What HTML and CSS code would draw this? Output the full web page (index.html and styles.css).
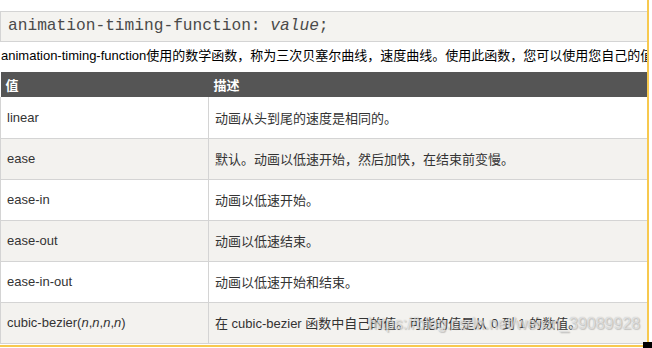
FILE: index.html
```
<!DOCTYPE html>
<html lang="zh">
<head>
<meta charset="utf-8">
<link rel="stylesheet" href="styles.css">
</head>
<body>
<div class="frame">
  <div class="code">animation-timing-function: <i>value</i>;</div>
  <p class="desc">animation-timing-function使用的数学函数，称为三次贝塞尔曲线，速度曲线。使用此函数，您可以使用您自己的值来充填此函数</p>
  <table class="ref">
    <thead>
      <tr><th class="c1">值</th><th>描述</th></tr>
    </thead>
    <tbody>
      <tr><td class="c1">linear</td><td>动画从头到尾的速度是相同的。</td></tr>
      <tr><td class="c1">ease</td><td>默认。动画以低速开始，然后加快，在结束前变慢。</td></tr>
      <tr><td class="c1">ease-in</td><td>动画以低速开始。</td></tr>
      <tr><td class="c1">ease-out</td><td>动画以低速结束。</td></tr>
      <tr><td class="c1">ease-in-out</td><td>动画以低速开始和结束。</td></tr>
      <tr><td class="c1">cubic-bezier(<i>n</i>,<i>n</i>,<i>n</i>,<i>n</i>)</td><td>在 cubic-bezier 函数中自己的值。可能的值是从 0 到 1 的数值。</td></tr>
    </tbody>
  </table>
  <div class="watermark">https://blog.csdn.net/weixin_39089928</div>
</div>
<div class="corner"></div>
</body>
</html>
```
FILE: styles.css
```
html, body {
  margin: 0;
  padding: 0;
  background: #fff;
  overflow: hidden;
}
body {
  position: relative;
  width: 652px;
  height: 348px;
  font-family: "Liberation Sans", Arial, "Noto Sans CJK SC", sans-serif;
  color: #333;
}
.frame {
  position: relative;
  width: 649px;
  height: 347px;
  border-right: 2px solid #f7c94f;
  border-bottom: 2px solid #f7c94f;
  overflow: hidden;
  padding-top: 11px;
  box-sizing: border-box;
}
.code {
  width: 700px;
  height: 31px;
  box-sizing: border-box;
  background: #f4f3f0;
  border: 1px solid #d4d4d4;
  font-family: "Liberation Mono", "Courier New", monospace;
  font-size: 16.2px;
  line-height: 29px;
  padding-left: 7px;
  color: #4a4a4a;
  white-space: nowrap;
}
.code i { font-style: italic; }
.desc {
  margin: 0;
  height: 30px;
  line-height: 28px;
  font-size: 13px;
  color: #000;
  white-space: nowrap;
  padding-left: 1px;
}
.ref {
  border-collapse: collapse;
  width: 700px;
  font-size: 13px;
  table-layout: fixed;
}
.ref th {
  background: #555;
  color: #fff;
  font-weight: bold;
  text-align: left;
  height: 25px;
  padding: 0 0 0 5px;
  box-sizing: border-box;
  font-size: 13px;
}
.ref th.c1 { width: 208px; }
.ref td {
  height: 41px;
  box-sizing: border-box;
  padding: 0 0 0 6px;
  border: 1px solid #d4d4d4;
  border-top: none;
  vertical-align: middle;
}
.ref tbody tr:nth-child(even) td { background: #f3f2ef; }
.ref td i { font-style: italic; }
.watermark {
  position: absolute;
  left: 368px;
  top: 315px;
  font-size: 16px;
  color: rgba(255, 255, 255, 0.55);
  text-shadow: 0 0 1px rgba(120, 120, 120, 0.5), 1px 1px 1px rgba(120, 120, 120, 0.35);
  white-space: nowrap;
}
.corner {
  position: absolute;
  left: 643px;
  top: 342px;
  width: 9px;
  height: 6px;
  background: #000;
}
```
